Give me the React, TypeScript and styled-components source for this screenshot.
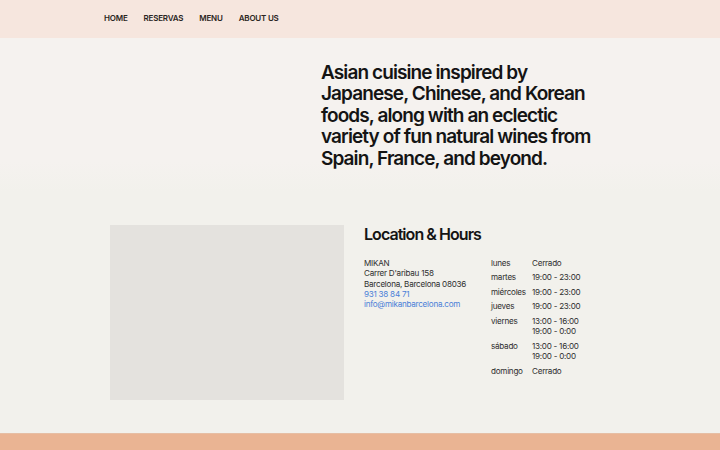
import React from "react";
import styled, { createGlobalStyle } from "styled-components";

const Global = createGlobalStyle`
  html, body { margin: 0; padding: 0; }
  body { background: #f2f1ec; font-family: Inter, "Liberation Sans", sans-serif; color: #1a1a1a; }
`;

const Page = styled.div`
  width: 720px;
  height: 450px;
  overflow: hidden;
  display: flex;
  flex-direction: column;
`;

const Header = styled.header`
  height: 38px;
  background: #f6e6de;
  display: flex;
  align-items: center;
  padding: 0 0 2px 104px;
  box-sizing: border-box;
  gap: 16px;
  flex-shrink: 0;
`;

const NavLink = styled.a`
  font-family: Inter, "Liberation Sans", sans-serif;
  font-size: 8px;
  font-weight: 600;
  color: #2a2522;
  text-decoration: none;
  letter-spacing: -0.2px;
  line-height: 1;
`;

const Hero = styled.section`
  height: 154px;
  background: linear-gradient(#f5f2ef 0%, #f5f2ef 80%, #f2f1ec 100%);
  display: flex;
  padding-left: 321px;
  padding-top: 24px;
  box-sizing: border-box;
  flex-shrink: 0;
`;

const Headline = styled.h1`
  margin: 0;
  font-family: Inter, "Liberation Sans", sans-serif;
  font-size: 19px;
  line-height: 21.4px;
  font-weight: 600;
  letter-spacing: -0.9px;
  color: #141414;
  width: 290px;
`;

const Info = styled.section`
  flex: 1;
  display: flex;
  padding: 33px 0 0 110px;
  gap: 20px;
  background: #f2f1ec;
`;

const MapBox = styled.div`
  width: 234px;
  height: 175px;
  background: #e4e2de;
  flex-shrink: 0;
`;

const Details = styled.div`
  display: flex;
  flex-direction: column;
`;

const Title = styled.h2`
  margin: 0;
  font-family: Inter, "Liberation Sans", sans-serif;
  font-size: 16px;
  line-height: 18px;
  font-weight: 600;
  letter-spacing: -0.95px;
  color: #141414;
`;

const Columns = styled.div`
  display: flex;
  margin-top: 15px;
`;

const Address = styled.div`
  display: flex;
  flex-direction: column;
  font-size: 8.1px;
  line-height: 10.3px;
  letter-spacing: -0.25px;
  color: #2e2e2e;
  width: 127px;
  white-space: nowrap;
`;

const Link = styled.a`
  color: #4a7fd8;
  text-decoration: none;
`;

const Hours = styled.div`
  display: grid;
  grid-template-columns: 41px auto;
  row-gap: 4.2px;
  font-size: 8.1px;
  line-height: 10.3px;
  letter-spacing: -0.25px;
  color: #2e2e2e;
`;

const Day = styled.div``;
const Time = styled.div`
  display: flex;
  flex-direction: column;
`;

const Footer = styled.footer`
  height: 17px;
  background: #eab493;
  border-top: 1px solid #e6bea4;
  box-sizing: border-box;
  flex-shrink: 0;
`;

const hours: [string, string[]][] = [
  ["lunes", ["Cerrado"]],
  ["martes", ["19:00 - 23:00"]],
  ["miércoles", ["19:00 - 23:00"]],
  ["jueves", ["19:00 - 23:00"]],
  ["viernes", ["13:00 - 16:00", "19:00 - 0:00"]],
  ["sábado", ["13:00 - 16:00", "19:00 - 0:00"]],
  ["domingo", ["Cerrado"]],
];

export default function App() {
  return (
    <Page>
      <Global />
      <Header>
        <NavLink>HOME</NavLink>
        <NavLink>RESERVAS</NavLink>
        <NavLink>MENU</NavLink>
        <NavLink>ABOUT US</NavLink>
      </Header>
      <Hero>
        <Headline>
          Asian cuisine inspired by Japanese, Chinese, and Korean foods, along
          with an eclectic variety of fun natural wines from Spain, France, and
          beyond.
        </Headline>
      </Hero>
      <Info>
        <MapBox />
        <Details>
          <Title>Location &amp; Hours</Title>
          <Columns>
            <Address>
              <span>MIKAN</span>
              <span>Carrer D'aribau 158</span>
              <span>Barcelona, Barcelona 08036</span>
              <Link>931 38 84 71</Link>
              <Link>info@mikanbarcelona.com</Link>
            </Address>
            <Hours>
              {hours.map(([d, ts]) => (
                <React.Fragment key={d}>
                  <Day>{d}</Day>
                  <Time>
                    {ts.map((t) => (
                      <span key={t}>{t}</span>
                    ))}
                  </Time>
                </React.Fragment>
              ))}
            </Hours>
          </Columns>
        </Details>
      </Info>
      <Footer />
    </Page>
  );
}
